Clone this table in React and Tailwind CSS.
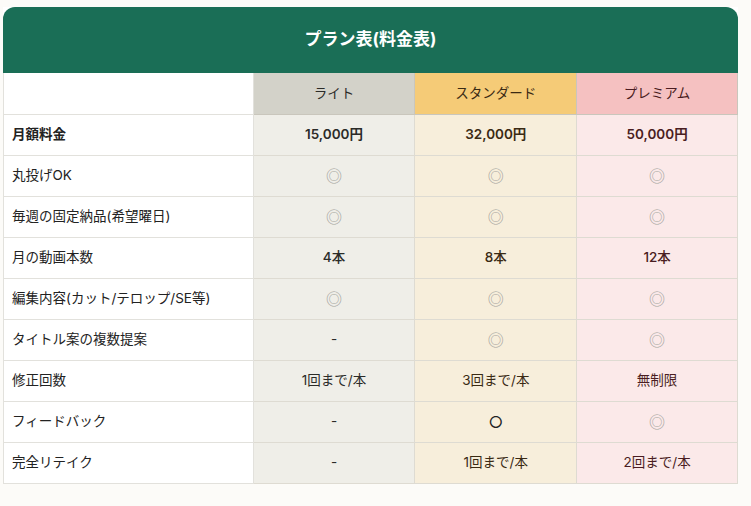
import React from "react";

const plans = [
  { name: "ライト", head: "bg-[#d3d2c9]", cell: "bg-[#efeee8]", text: "text-[#2b2b28]" },
  { name: "スタンダード", head: "bg-[#f5cb77]", cell: "bg-[#f7eedb]", text: "text-[#3a2a14]" },
  { name: "プレミアム", head: "bg-[#f5c1c1]", cell: "bg-[#fbe9e9]", text: "text-[#4a1d22]" },
];

const rows = [
  { label: "月額料金", values: ["15,000円", "32,000円", "50,000円"], bold: true },
  { label: "丸投げOK", values: ["◎", "◎", "◎"] },
  { label: "毎週の固定納品(希望曜日)", values: ["◎", "◎", "◎"] },
  { label: "月の動画本数", values: ["4本", "8本", "12本"], medium: true },
  { label: "編集内容(カット/テロップ/SE等)", values: ["◎", "◎", "◎"] },
  { label: "タイトル案の複数提案", values: ["-", "◎", "◎"] },
  { label: "修正回数", values: ["1回まで/本", "3回まで/本", "無制限"] },
  { label: "フィードバック", values: ["-", "○", "◎"] },
  { label: "完全リテイク", values: ["-", "1回まで/本", "2回まで/本"] },
];

const Mark = ({ v }) => {
  if (v === "◎") return <span className="text-[16px] text-[#a3a29c]">◎</span>;
  if (v === "○") return <span className="text-[16px] text-[#222]">○</span>;
  return <span>{v}</span>;
};

export default function App() {
  return (
    <div
      className="min-h-[506px] w-[751px] bg-[#fcfbf8] pl-[3px] pt-[7px]"
      style={{ fontFamily: '"Inter", "Noto Sans CJK JP", sans-serif' }}
    >
      <div className="w-[735px] bg-white">
        <div className="flex h-[66px] items-center justify-center rounded-t-[12px] bg-[#1a6e56] text-[17px] font-bold text-white">
          プラン表(料金表)
        </div>
        <table className="w-full border-collapse text-[13.5px] text-[#222]">
          <colgroup>
            <col className="w-[250px]" />
            <col className="w-[162px]" />
            <col className="w-[162px]" />
            <col className="w-[161px]" />
          </colgroup>
          <thead>
            <tr className="h-[41px]">
              <th className="border border-t-0 border-[#e2e1dc] bg-white"></th>
              {plans.map((p) => (
                <th
                  key={p.name}
                  className={`border border-t-0 border-[#c9c6bc] font-normal ${p.head} ${p.text}`}
                >
                  {p.name}
                </th>
              ))}
            </tr>
          </thead>
          <tbody>
            {rows.map((r) => (
              <tr key={r.label} className="h-[41px]">
                <td
                  className={`border border-[#e2e1dc] bg-white pl-[8px] ${r.bold ? "font-bold" : ""}`}
                >
                  {r.label}
                </td>
                {r.values.map((v, i) => (
                  <td
                    key={i}
                    className={`border border-[#dedbd2] text-center ${plans[i].cell} ${plans[i].text} ${
                      r.bold ? "font-semibold" : r.medium ? "font-medium" : ""
                    }`}
                  >
                    <Mark v={v} />
                  </td>
                ))}
              </tr>
            ))}
          </tbody>
        </table>
      </div>
    </div>
  );
}
